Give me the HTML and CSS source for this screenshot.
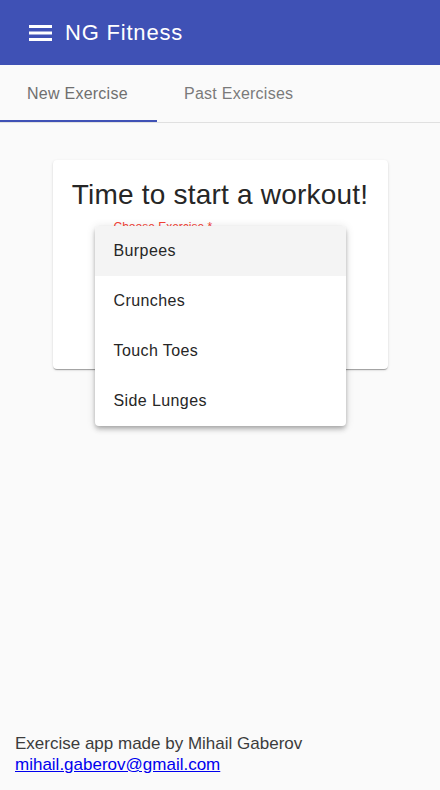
FILE: index.html
```html
<!DOCTYPE html>
<html>
<head>
<meta charset="utf-8">
<link rel="stylesheet" href="styles.css">
</head>
<body>
<div class="app">
  <header class="toolbar">
    <svg class="menu-icon" width="23" height="16" viewBox="0 0 23 16"><rect x="0" y="0" width="23" height="3" fill="#fff"/><rect x="0" y="6.5" width="23" height="3" fill="#fff"/><rect x="0" y="13" width="23" height="3" fill="#fff"/></svg>
    <span class="brand">NG Fitness</span>
  </header>
  <nav class="tabs">
    <div class="tab active">New Exercise</div>
    <div class="tab">Past Exercises</div>
  </nav>
  <main class="content">
    <section class="card">
      <h1 class="card-title">Time to start a workout!</h1>
      <div class="field-label">Choose Exercise *</div>
      <ul class="menu">
        <li class="option highlighted">Burpees</li>
        <li class="option">Crunches</li>
        <li class="option">Touch Toes</li>
        <li class="option">Side Lunges</li>
      </ul>
    </section>
  </main>
  <footer class="footer">
    <div>Exercise app made by Mihail Gaberov</div>
    <a href="#" class="mail">mihail.gaberov@gmail.com</a>
  </footer>
</div>
</body>
</html>
```
FILE: styles.css
```css
html, body {
  margin: 0;
  padding: 0;
  background: #fafafa;
  font-family: "Liberation Sans", Arial, sans-serif;
}
.app {
  height: 790px;
  display: flex;
  flex-direction: column;
}
.toolbar {
  height: 65px;
  background: #3f51b5;
  display: flex;
  align-items: center;
  padding-left: 29px;
  box-sizing: border-box;
  gap: 13px;
}
.menu-icon {
  display: block;
}
.brand {
  color: #fff;
  font-size: 22px;
  letter-spacing: 0.8px;
  line-height: 1;
}
.tabs {
  display: flex;
  height: 57px;
  border-bottom: 1px solid #e0e0e0;
}
.tab {
  padding: 0 27px 0 27px;
  display: flex;
  align-items: center;
  font-size: 16px;
  letter-spacing: 0.25px;
  color: #7a7a7a;
  box-sizing: border-box;
  height: 57px;
}
.tab.active {
  color: #6f6f6f;
  border-bottom: 2px solid #3f51b5;
  padding-top: 2px;
  width: 157px;
}
.content {
  flex: 1;
  display: flex;
  justify-content: center;
  align-items: flex-start;
  padding-top: 37px;
}
.card {
  position: relative;
  width: 335px;
  height: 209px;
  box-sizing: border-box;
  background: #fff;
  border-radius: 4px;
  box-shadow: 0 2px 1px -1px rgba(0,0,0,.2), 0 1px 1px 0 rgba(0,0,0,.14), 0 1px 3px 0 rgba(0,0,0,.12);
  padding: 19px 0 16px;
}
.card-title {
  margin: 0;
  font-weight: normal;
  font-size: 28px;
  letter-spacing: 0.2px;
  line-height: 32px;
  color: #262626;
  text-align: center;
  white-space: nowrap;
}
.field-label {
  margin: 9px 0 0 61px;
  font-size: 12px;
  line-height: 14px;
  color: #f44336;
}
.menu {
  position: absolute;
  left: 42px;
  top: 66px;
  width: 251px;
  margin: 0;
  padding: 0;
  list-style: none;
  background: #fff;
  border-radius: 4px;
  box-shadow: 0 2px 4px -1px rgba(0,0,0,.2), 0 4px 5px 0 rgba(0,0,0,.14), 0 1px 10px 0 rgba(0,0,0,.12);
  overflow: hidden;
}
.option {
  height: 50px;
  display: flex;
  align-items: center;
  padding-left: 19px;
  font-size: 16px;
  letter-spacing: 0.4px;
  color: #262626;
}
.option.highlighted {
  background: #f4f4f4;
}
.footer {
  padding: 0 15px 15px;
  font-size: 17px;
  line-height: 21px;
  color: #3c3c3c;
}
.mail {
  color: #0000ee;
}
```
